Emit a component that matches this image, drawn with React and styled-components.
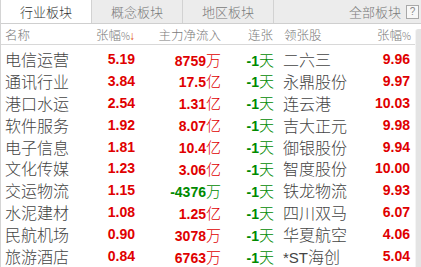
import styled, { createGlobalStyle } from 'styled-components'

const Global = createGlobalStyle`
  html, body {
    margin: 0;
    padding: 0;
    background: #fff;
  }
  body {
    font-family: "Noto Sans CJK SC", "Liberation Sans", sans-serif;
  }
`;

const cjk = `"Noto Sans CJK SC", sans-serif`;
const num = `"Liberation Sans", Arial, sans-serif`;

const Panel = styled.div`
  width: 421px;
  height: 267px;
  overflow: hidden;
  border-left: 1px solid #d4d4d4;
  box-sizing: border-box;
  display: flex;
  flex-direction: column;
`;

const TabBar = styled.div`
  display: flex;
  height: 23px;
  background: #ececec;
  border-bottom: 1px solid #cfcfcf;
  flex-shrink: 0;
`;

const Tab = styled.div`
  width: 90px;
  display: flex;
  align-items: center;
  justify-content: center;
  font-family: ${cjk};
  font-size: 13px;
  font-weight: 300;
  color: ${p => (p.$active ? '#333' : '#7a7a7a')};
  background: ${p => (p.$active ? '#fff' : 'transparent')};
  border-right: 1px solid #d2d2d2;
`;

const TabFill = styled.div`
  flex: 1;
  display: flex;
  align-items: center;
  justify-content: flex-end;
  gap: 5px;
  padding-right: 2px;
  font-family: ${cjk};
  font-size: 13px;
  font-weight: 300;
  color: #7a7a7a;
`;

const Help = styled.span`
  width: 11px;
  height: 12px;
  border: 1px solid #a8a8a8;
  background: #f8f8f8;
  display: flex;
  align-items: center;
  justify-content: center;
  font-family: ${num};
  font-size: 10px;
  color: #888;
`;

const Body = styled.div`
  flex: 1;
  display: flex;
`;

const Table = styled.div`
  flex: 1;
  display: flex;
  flex-direction: column;
`;

const Scroll = styled.div`
  width: 5px;
  margin-top: 5px;
  background: #e4e4e4;
  border-left: 1px solid #f4f4f4;
  border-top-left-radius: 3px;
`;

const cols = `80px 54px 86px 53px 86px 50px`;

const Head = styled.div`
  display: grid;
  grid-template-columns: ${cols};
  height: 20px;
  align-items: center;
  border-bottom: 1px solid #d8d8d8;
  font-family: ${cjk};
  font-size: 12.5px;
  font-weight: 300;
  color: #7a7a7a;
`;

const HeadCell = styled.div`
  text-align: ${p => p.$align || 'right'};
  padding-left: ${p => p.$pl || 0}px;
  padding-right: ${p => p.$pr || 0}px;
  white-space: nowrap;
`;

const Pct = styled.span`
  font-size: 10px;
  letter-spacing: -1px;
`;

const Arrow = styled.span`
  color: #e2500f;
  font-family: ${num};
  font-size: 12px;
`;

const Rows = styled.div`
  padding-top: 2px;
`;

const Row = styled.div`
  display: grid;
  grid-template-columns: ${cols};
  height: 21.9px;
  align-items: center;
`;

const Name = styled.div`
  font-family: ${cjk};
  font-size: 16px;
  font-weight: 300;
  color: #444;
  padding-left: ${p => p.$pl || 4}px;
  white-space: nowrap;
`;

const Num = styled.div`
  text-align: right;
  font-family: ${num};
  font-weight: bold;
  font-size: 14px;
  color: ${p => (p.$down ? '#008a00' : '#e00000')};
  white-space: nowrap;
`;

const Unit = styled.span`
  font-family: ${cjk};
  font-weight: 300;
  font-size: 15px;
`;

const St = styled.span`
  font-family: ${num};
  font-size: 15px;
`;

const data = [
  ['电信运营', '5.19', '8759', '万', '二六三', '9.96'],
  ['通讯行业', '3.84', '17.5', '亿', '永鼎股份', '9.97'],
  ['港口水运', '2.54', '1.31', '亿', '连云港', '10.03'],
  ['软件服务', '1.92', '8.07', '亿', '吉大正元', '9.98'],
  ['电子信息', '1.81', '10.4', '亿', '御银股份', '9.94'],
  ['文化传媒', '1.23', '3.06', '亿', '智度股份', '10.00'],
  ['交运物流', '1.15', '-4376', '万', '铁龙物流', '9.93'],
  ['水泥建材', '1.08', '1.25', '亿', '四川双马', '6.07'],
  ['民航机场', '0.90', '3078', '万', '华夏航空', '4.06'],
  ['旅游酒店', '0.84', '6763', '万', '*ST海创', '5.04'],
];

const Leader = ({ name }) =>
  name.startsWith('*ST') ? (
    <Name $pl={9}><St>*ST</St>{name.slice(3)}</Name>
  ) : (
    <Name $pl={9}>{name}</Name>
  );

export default function App() {
  return (
    <Panel>
      <Global />
      <TabBar>
        <Tab $active>行业板块</Tab>
        <Tab>概念板块</Tab>
        <Tab>地区板块</Tab>
        <TabFill>
          全部板块<Help>?</Help>
        </TabFill>
      </TabBar>
      <Body>
        <Table>
          <Head>
            <HeadCell $align="left" $pl={4}>名称</HeadCell>
            <HeadCell>张幅<Pct>%</Pct><Arrow>↓</Arrow></HeadCell>
            <HeadCell>主力净流入</HeadCell>
            <HeadCell $pr={1}>连张</HeadCell>
            <HeadCell $align="left" $pl={10}>领张股</HeadCell>
            <HeadCell $pr={0}>张幅<Pct>%</Pct></HeadCell>
          </Head>
          <Rows>
            {data.map(r => (
              <Row key={r[0]}>
                <Name>{r[0]}</Name>
                <Num>{r[1]}</Num>
                <Num $down={r[2].startsWith('-')}>
                  {r[2]}<Unit>{r[3]}</Unit>
                </Num>
                <Num $down>
                  -1<Unit>天</Unit>
                </Num>
                <Leader name={r[4]} />
                <Num>{r[5]}</Num>
              </Row>
            ))}
          </Rows>
        </Table>
        <Scroll />
      </Body>
    </Panel>
  );
}
